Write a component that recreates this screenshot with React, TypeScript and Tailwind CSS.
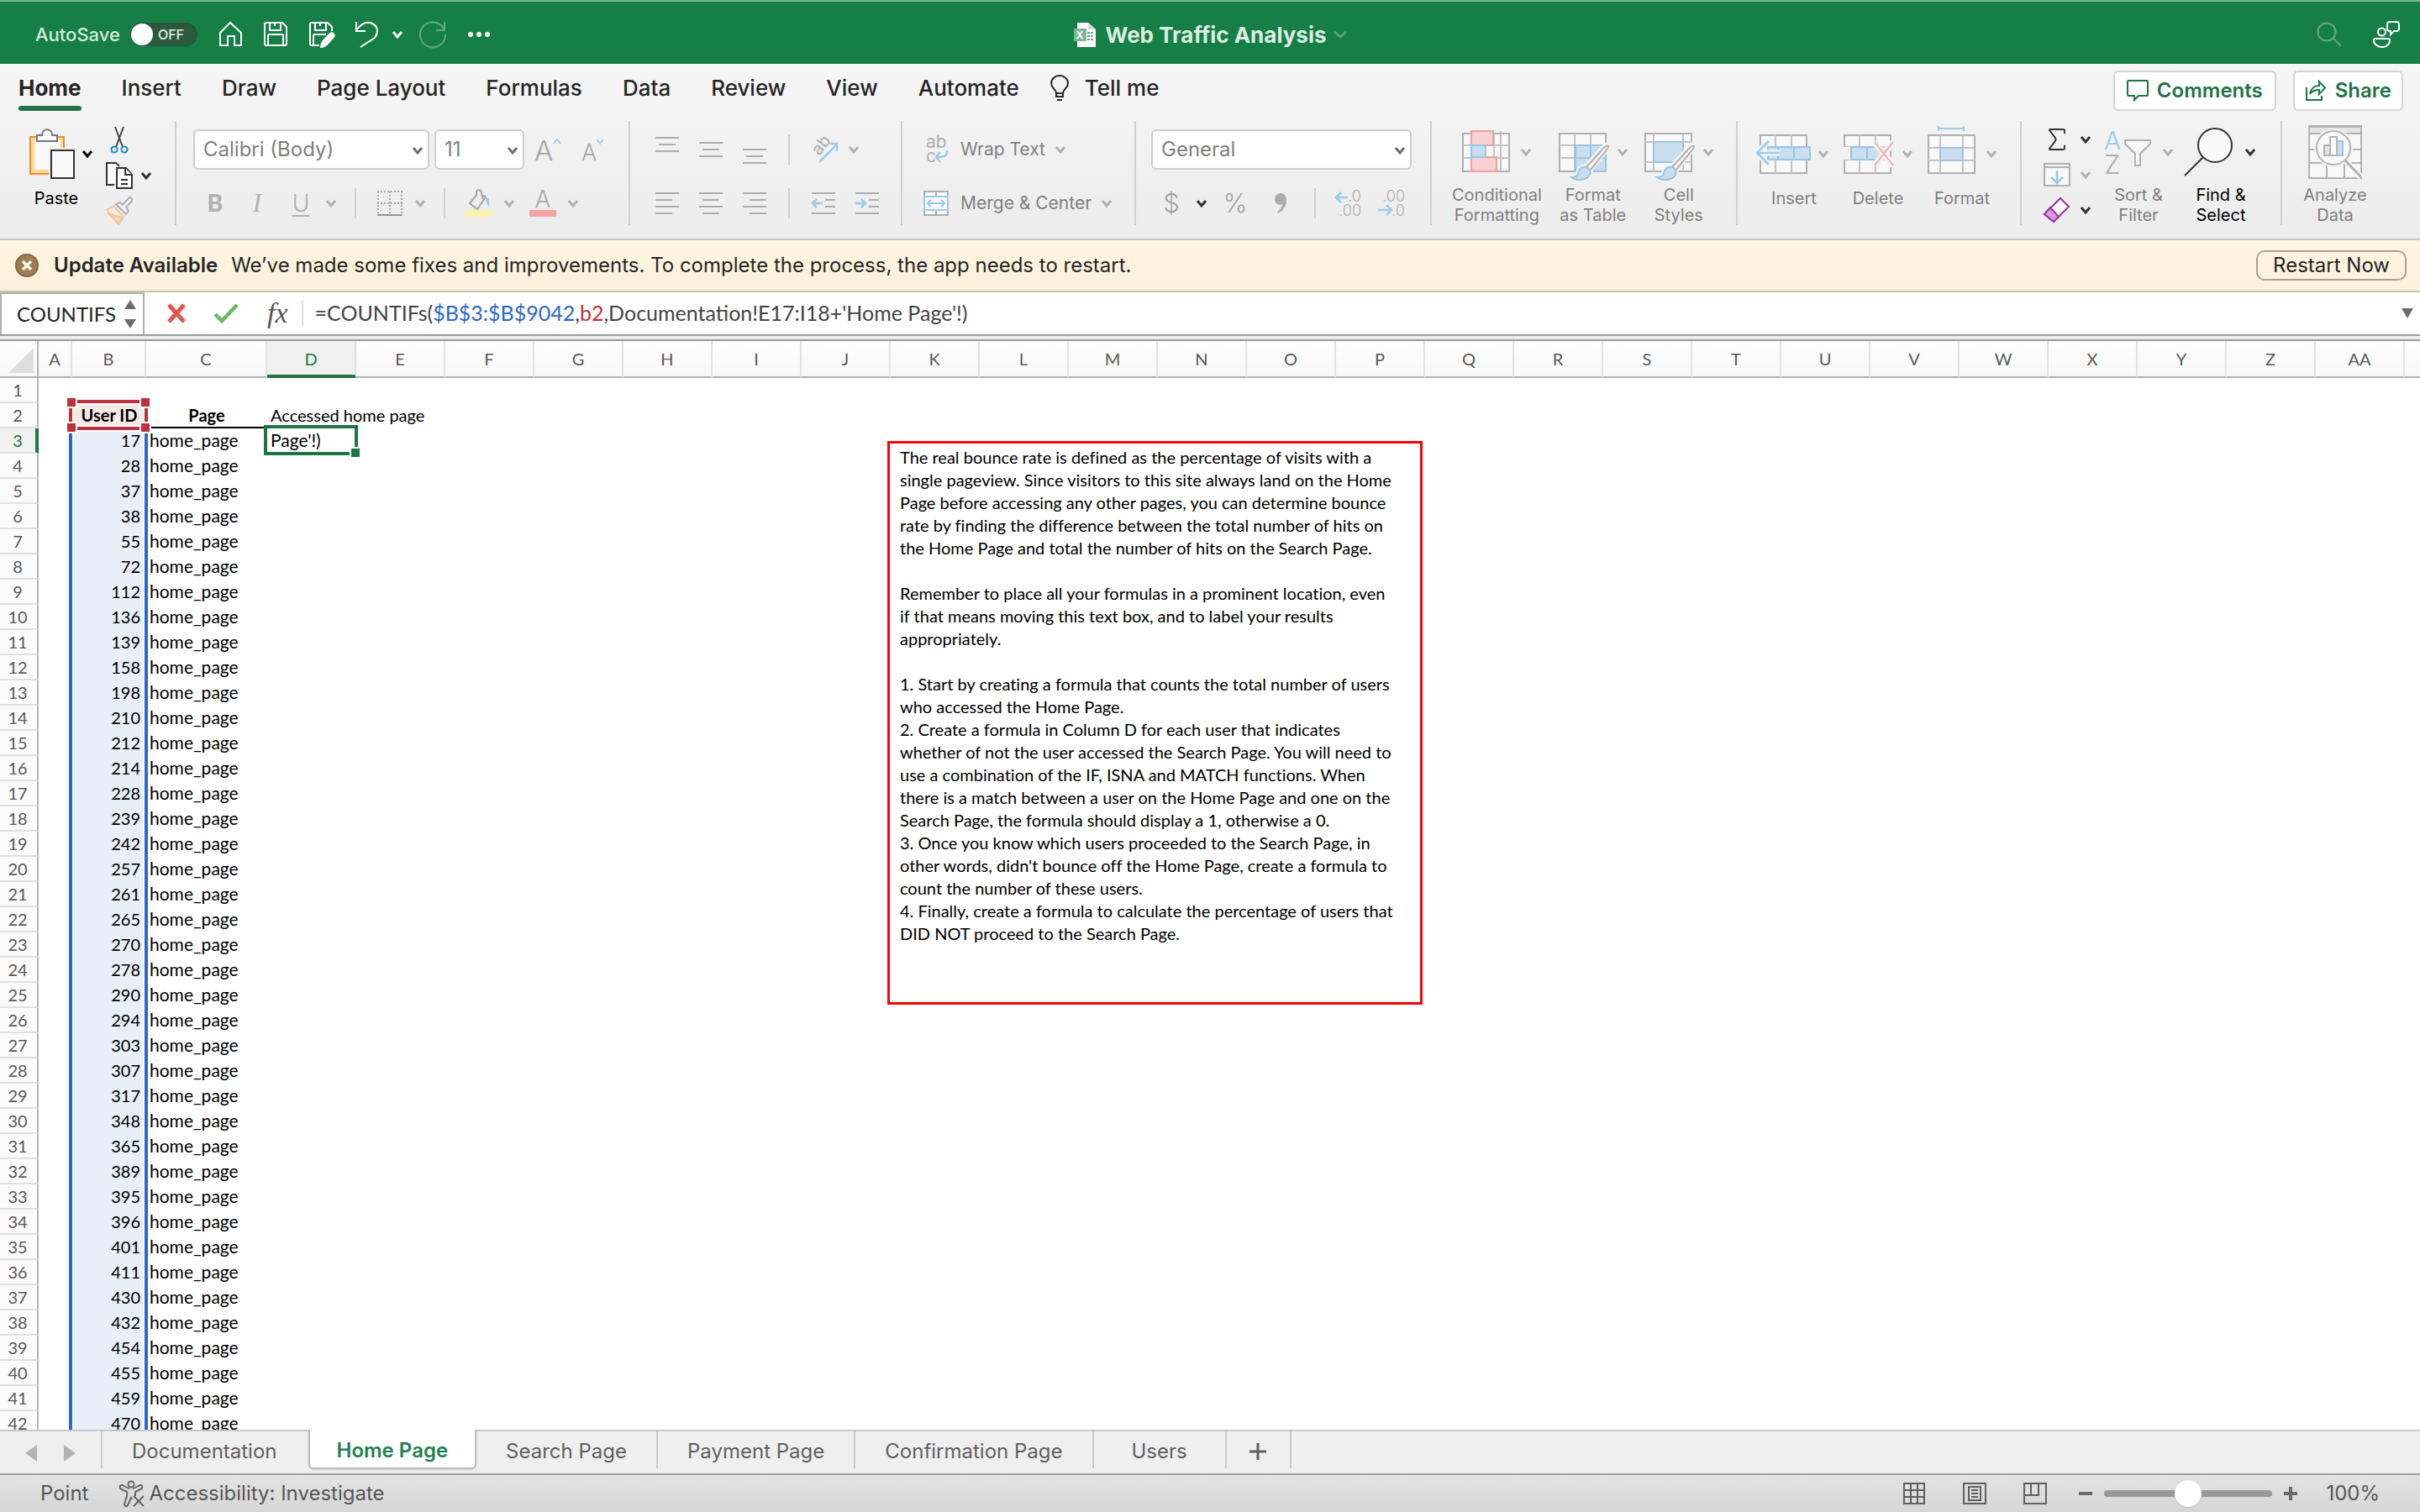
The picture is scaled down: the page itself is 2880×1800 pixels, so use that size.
import type { ReactNode } from 'react'
import { Sigma } from 'lucide-react'

const COLUMNS = [
  'A', 'B', 'C', 'D', 'E', 'F', 'G', 'H', 'I', 'J', 'K', 'L', 'M', 'N',
  'O', 'P', 'Q', 'R', 'S', 'T', 'U', 'V', 'W', 'X', 'Y', 'Z', 'AA',
]

/** Columns that differ from the default width. */
const COLUMN_WIDTHS: Record<string, string> = {
  A: 'w-[40px]',
  B: 'w-[88px]',
  C: 'w-[144px]',
}

/** User IDs from row 3 down. */
const USER_IDS = [
  17, 28, 37, 38, 55, 72, 112, 136, 139, 158, 198, 210, 212, 214, 228, 239, 242, 257, 261, 265,
  270, 278, 290, 294, 303, 307, 317, 348, 365, 389, 395, 396, 401, 411, 430, 432, 454, 455, 459, 470,
]

const RIBBON_TABS = [
  'Home', 'Insert', 'Draw', 'Page Layout', 'Formulas', 'Data', 'Review', 'View', 'Automate',
]

const SHEETS = [
  'Documentation', 'Home Page', 'Search Page', 'Payment Page', 'Confirmation Page', 'Users',
]

const NOTE = `The real bounce rate is defined as the percentage of visits with a
single pageview. Since visitors to this site always land on the Home
Page before accessing any other pages, you can determine bounce
rate by finding the difference between the total number of hits on
the Home Page and total the number of hits on the Search Page.

Remember to place all your formulas in a prominent location, even
if that means moving this text box, and to label your results
appropriately.

1. Start by creating a formula that counts the total number of users
who accessed the Home Page.
2. Create a formula in Column D for each user that indicates
whether of not the user accessed the Search Page. You will need to
use a combination of the IF, ISNA and MATCH functions. When
there is a match between a user on the Home Page and one on the
Search Page, the formula should display a 1, otherwise a 0.
3. Once you know which users proceeded to the Search Page, in
other words, didn't bounce off the Home Page, create a formula to
count the number of these users.
4. Finally, create a formula to calculate the percentage of users that
DID NOT proceed to the Search Page.`

export default function App() {
  return (
    <div className="flex h-screen flex-col overflow-hidden bg-white font-['Inter',sans-serif] text-[#262626] [&_svg]:overflow-visible">
      <TitleBar />
      <Ribbon />
      <UpdateBar />
      <FormulaBar />
      <Sheet />
      <SheetTabs />
      <StatusBar />
    </div>
  )
}

function TitleBar() {
  return (
    <header className="grid h-[76px] shrink-0 grid-cols-[1fr_auto_1fr] items-center border-t-2 border-[#7db393] bg-[#157f46] pt-1 text-white">
      <div className="flex items-center pl-[42px]">
        <label htmlFor="autosave" className="text-[22px] font-medium text-[#d5e9dd]">
          AutoSave
        </label>
        <span className="relative ml-3 inline-flex h-7 w-20 items-center rounded-full bg-[#2b5a3e] shadow-inner">
          <input id="autosave" type="checkbox" role="switch" className="absolute inset-0 opacity-0" />
          <span className="ml-px size-[26px] rounded-full bg-white" />
          <span className="ml-1.5 text-[16px] font-medium text-[#e3ece6]">OFF</span>
        </span>
        <div className="ml-6 flex items-center gap-6">
          <IconButton label="Home">
            <path d="M15 2 28 14v15h-8V18h-8v11H3V14Z" />
          </IconButton>
          <IconButton label="Save">
            <path d="M4 2h19l5 5v20a2 2 0 0 1-2 2H4a2 2 0 0 1-2-2V4a2 2 0 0 1 2-2Z" />
            <path d="M8 2v9h13V2M14 2v4M6 29V17a1 1 0 0 1 1-1h16a1 1 0 0 1 1 1v12" />
          </IconButton>
          <IconButton label="Save as">
            <path d="M13 29H4a2 2 0 0 1-2-2V4a2 2 0 0 1 2-2h19l5 5v5" />
            <path d="M8 2v9h13V2M14 2v4M6 29V17a1 1 0 0 1 1-1h14" />
            <path d="M15 31c0-5 2-7 11-16 2-2 6 1 4 4-8 9-10 12-15 12Z" fill="currentColor" />
          </IconButton>
          <IconButton label="Undo">
            <path d="M3 1v11h11M3 11C9 3 16 0 22 3c8 4 7 12 3 17L8 31" />
          </IconButton>
        </div>
        <button type="button" aria-label="Undo history" className="ml-4">
          <Chevron />
        </button>
        <button type="button" aria-label="Redo" className="ml-5 text-[#63a883]">
          <Svg>
            <path d="M30 1v10H20M30 11A15 15 0 1 0 31 16" />
          </Svg>
        </button>
        <button type="button" aria-label="More" className="ml-[26px]">
          <svg viewBox="0 0 26 6" className="h-1.5 w-[26px]" fill="currentColor">
            <circle cx="3" cy="3" r="3" />
            <circle cx="13" cy="3" r="3" />
            <circle cx="23" cy="3" r="3" />
          </svg>
        </button>
      </div>

      <button type="button" className="flex items-center text-[#dcede3]">
        <svg viewBox="0 0 28 30" className="h-[30px] w-7">
          <path d="M5 1h13l9 8v21H5Z" fill="#fff" />
          <path d="M18 1v8h9Z" fill="#cfdcd4" />
          <rect x="1" y="8" width="15" height="15" rx="1" fill="#7fb597" />
          <text x="8" y="20" fontSize="12" fontWeight="700" textAnchor="middle" fill="#fff">X</text>
          <path d="M17 13h7M17 17h7M17 21h7" stroke="#6aa585" strokeWidth="2" strokeDasharray="3 1" />
        </svg>
        <span className="ml-2.5 text-[26px] font-bold">Web Traffic Analysis</span>
        <svg viewBox="0 0 16 8" className="ml-2 h-2 w-4" fill="none" stroke="#5ea57e" strokeWidth="2.5">
          <path d="m1 1 7 6 7-6" />
        </svg>
      </button>

      <div className="flex items-center justify-end gap-9 pr-6">
        <button type="button" aria-label="Search" className="text-[#63a883]">
          <Svg>
            <circle cx="13" cy="13" r="10.5" />
            <path d="m21 21 9 9" />
          </Svg>
        </button>
        <button type="button" aria-label="Presence">
          <Svg>
            <circle cx="10.5" cy="13" r="4.5" />
            <path d="M3 21h15a2 2 0 0 1 2 2c0 5-4 8-9 8s-10-3-10-8a2 2 0 0 1 2-2Z" />
            <path d="M20 1h8a3 3 0 0 1 3 3v5a3 3 0 0 1-3 3h-3l-4 4v-4h-1a3 3 0 0 1-3-3V4a3 3 0 0 1 3-3Z" />
          </Svg>
        </button>
      </div>
    </header>
  )
}

function Ribbon() {
  return (
    <section className="h-[210px] shrink-0 border-b-2 border-[#c6c6c6] bg-linear-to-b from-[#f6f6f6] to-[#ececec]">
      <div className="flex h-[68px] items-start justify-between pt-2">
        <nav className="flex items-start gap-12 pl-[22px] text-[26px] leading-[42px] font-medium">
          {RIBBON_TABS.map((tab) => (
            <button
              key={tab}
              type="button"
              className={
                tab === 'Home'
                  ? 'relative font-bold after:absolute after:inset-x-0 after:top-[42px] after:h-1.5 after:rounded-full after:bg-[#217346]'
                  : ''
              }
            >
              {tab}
            </button>
          ))}
          <button type="button" className="-ml-3 flex items-center gap-[18px]">
            <svg viewBox="0 0 24 32" className="h-8 w-6" fill="none" stroke="currentColor" strokeWidth="2">
              <path d="M8 22c0-5-6-6-6-12a10 9 0 0 1 20 0c0 6-6 7-6 12ZM8 22v4h8v-4M9 30h6" />
            </svg>
            Tell me
          </button>
        </nav>
        <div className="flex gap-5 pr-5 text-[24px] font-semibold text-[#217346]">
          <button type="button" className="flex h-12 items-center gap-2.5 rounded-md border-2 border-[#d4d4d4] bg-white px-3.5">
            <svg viewBox="0 0 26 26" className="size-[26px]" fill="none" stroke="currentColor" strokeWidth="2">
              <path d="M2 1h22a1 1 0 0 1 1 1v16a1 1 0 0 1-1 1H14l-5 5v-5H2a1 1 0 0 1-1-1V2a1 1 0 0 1 1-1Z" />
            </svg>
            Comments
          </button>
          <button type="button" className="flex h-12 items-center gap-2.5 rounded-md border-2 border-[#d4d4d4] bg-white px-3">
            <svg viewBox="0 0 26 26" className="size-[26px]" fill="none" stroke="currentColor" strokeWidth="2">
              <path d="M2 9v15h18v-5" />
              <path d="M17 2v5C11 7 7 11 6 17c3-4 6-5 11-5v5l7-7.5Z" />
            </svg>
            Share
          </button>
        </div>
      </div>

      <div className="flex h-[124px] divide-x-2 divide-[#d0d0d0] text-[#7f7f7f]">
        <ClipboardGroup />
        <FontGroup />
        <AlignGroup />
        <WrapGroup />
        <NumberGroup />
        <StyleGroup />
        <CellsGroup />
        <EditGroup />
        <div className="flex pl-[22px]">
          <BigButton lines={['Analyze', 'Data']} noMenu>
            <svg viewBox="0 0 66 66" className="size-[66px]" fill="none" stroke="#b3b3b3" strokeWidth="2">
              <rect x="2" y="2" width="62" height="62" fill="#f8f8f8" />
              <path d="M2 3h62v8H2Z" fill="#e4e4e4" />
              <path d="M2 30h62M2 46h62M23 46v18M44 46v18" />
              <circle cx="31" cy="28" r="23" fill="#f3f3f3" stroke="none" />
              <circle cx="31" cy="28" r="20" fill="#fafafa" />
              <path d="m45 43 19 20" stroke="#f3f3f3" strokeWidth="7" />
              <path d="m45 43 19 20" strokeWidth="3" />
              <path d="M20 25h7v12h-7Z" fill="#e4e4e4" />
              <path d="M35 20h7v17h-7Z" fill="#c9dff0" stroke="#9cc3df" />
              <path d="M27 15h8v22h-8Z" fill="#fafafa" />
            </svg>
          </BigButton>
        </div>
      </div>
    </section>
  )
}

function ClipboardGroup() {
  return (
    <div className="flex w-[210px] pl-[34px]">
      <button type="button" className="flex flex-col text-black">
        <span className="flex h-[78px] items-center gap-2">
          <svg viewBox="0 0 56 62" className="h-[62px] w-14" fill="none" strokeWidth="2">
            <path d="M2 11h40v44H2Z" fill="#f7d98f" stroke="#ec8b38" />
            <path d="M7 14h31v36H7Z" fill="#f8f8f8" />
            <path d="M10 16V9h6c0-9 12-9 12 0h6v7Z" fill="#f8f8f8" stroke="#777" />
            <path d="M24 24h34v40H24Z" fill="#f0f0f0" />
            <path d="M27 27h27v33H27Z" fill="#fafafa" stroke="#333" />
          </svg>
          <Chevron />
        </span>
        <span className="mt-0.5 w-[66px] text-center text-[20px] leading-6">Paste</span>
      </button>
      <div className="ml-4 flex flex-col gap-2 pt-1.5 text-[#333]">
        <button type="button" aria-label="Cut" className="flex h-9 items-center pl-1">
          <svg viewBox="0 0 24 34" className="h-[34px] w-6" fill="none" stroke="#444" strokeWidth="2">
            <path d="m7 1 9 24M17 1 8 25" />
            <circle cx="6" cy="28" r="3.5" stroke="#1b87c9" />
            <circle cx="18" cy="28" r="3.5" stroke="#1b87c9" />
          </svg>
        </button>
        <button type="button" aria-label="Copy" className="flex h-9 items-center gap-2.5">
          <svg viewBox="0 0 32 34" className="h-[34px] w-8" fill="#fafafa" stroke="#333" strokeWidth="2">
            <path d="M10 28H1V2h11l4 4" />
            <path d="M13 8h11l7 8v16H13Z" />
            <path d="M23 8v8h8M18 22h8M18 27h8" />
          </svg>
          <Chevron />
        </button>
        <button type="button" aria-label="Format painter" className="flex h-9 items-center">
          <svg viewBox="0 0 32 34" className="h-[34px] w-8" fill="none" strokeWidth="2">
            <path d="M1 16 9 11l12 13-6 9Z" fill="#f8ecdf" stroke="#f2c4a0" />
            <path d="m4 21 16 4-5 7Z" fill="#f6d9b4" stroke="#f2c4a0" />
            <path d="m12 9 12 12 3-4-3-4 7-8c1-3-2-5-4-3l-7 8-3-3Z" fill="#f5f5f5" stroke="#adadad" />
          </svg>
        </button>
      </div>
    </div>
  )
}

function FontGroup() {
  return (
    <Rows className="w-[540px] pl-5">
      <div className="flex h-12 items-center">
        <Dropdown label="Font" value="Calibri (Body)" className="w-[281px]" />
        <Dropdown label="Font size" value="11" className="ml-1.5 w-[107px]" />
        <button type="button" aria-label="Increase font size" className="ml-3">
          <svg viewBox="0 0 32 36" className="h-9 w-8" fill="none" stroke="#9ccbe8" strokeWidth="2">
            <text x="0" y="31" fontSize="33" fontWeight="300" fill="#a6a6a6" stroke="none">A</text>
            <path d="m23 11 4-5 4 5" />
          </svg>
        </button>
        <button type="button" aria-label="Decrease font size" className="ml-6">
          <svg viewBox="0 0 32 36" className="h-9 w-8" fill="none" stroke="#9ccbe8" strokeWidth="2">
            <text x="0" y="31" fontSize="27" fontWeight="300" fill="#a6a6a6" stroke="none">A</text>
            <path d="m18 6 4 5 4-5" />
          </svg>
        </button>
      </div>
      <div className="flex h-9 items-center text-[28px] leading-9 text-[#b0b0b0]">
        <button type="button" aria-label="Bold" className="w-11 pl-2 text-center font-bold">B</button>
        <button type="button" aria-label="Italic" className="ml-1.5 w-12 pl-1 text-center font-['Liberation_Serif',serif] text-[31px] italic">I</button>
        <button type="button" aria-label="Underline" className="ml-1 w-12 pl-1 text-center font-light underline underline-offset-4">U</button>
        <Chevron className="ml-2" />
        <Divider className="ml-[22px]" />
        <svg viewBox="0 0 32 32" className="ml-6 size-8" fill="none" stroke="#a9a9a9" strokeWidth="2">
          <path d="M1 2h30M1 16h30M2 2v27M16 2v27M30 2v27" strokeDasharray="2 2" />
          <path d="M1 30h30" stroke="#969696" />
        </svg>
        <Chevron className="ml-3.5" />
        <Divider className="ml-[22px]" />
        <svg viewBox="0 0 32 34" className="ml-6 h-[34px] w-8" fill="none" stroke="#a6a6a6" strokeWidth="2">
          <path d="M0 25h32v8H0Z" fill="#f7f5a9" stroke="none" />
          <path d="M23 9c5 0 6 5 5 12-3-3-4-7-5-12Z" fill="#a9cbe5" stroke="none" />
          <path d="M14 6 5 17l9 7 9-13V8c-3 0-3 3-3 4M13 8V4c0-4 5-4 6 0l1 6" />
        </svg>
        <Chevron className="ml-3.5" />
        <svg viewBox="0 0 32 34" className="ml-[18px] h-[34px] w-8">
          <text x="16" y="22" fontSize="28" fontWeight="300" textAnchor="middle" fill="#a6a6a6">A</text>
          <path d="M0 25h32v8H0Z" fill="#f5a2a2" />
        </svg>
        <Chevron className="ml-3.5" />
      </div>
    </Rows>
  )
}

function AlignGroup() {
  return (
    <Rows className="w-[324px] pl-[30px]">
      <div className="flex h-12 items-center">
        <div className="flex gap-6">
          <Lines d="M0 5h28M4 13h20M0 21h28" label="Top align" />
          <Lines d="M0 11h28M4 19h20M0 27h28" label="Middle align" />
          <Lines d="M0 19h28M4 27h20M0 35h28" label="Bottom align" />
        </div>
        <Divider className="ml-[26px]" />
        <button type="button" aria-label="Orientation" className="ml-6 flex items-center gap-3 text-[#b0b0b0]">
          <svg viewBox="0 0 34 34" className="size-[34px]" fill="none" stroke="#9ccbe8" strokeWidth="2.5">
            <text fontSize="20" fill="#adadad" stroke="none" transform="translate(11 25) rotate(-52)">ab</text>
            <path d="M11 32 32 11M23 10h9v9" />
          </svg>
          <Chevron />
        </button>
      </div>
      <div className="flex h-9 items-center">
        <div className="flex gap-6">
          <Lines d="M0 7h28M0 15h20M0 23h28M0 31h20" label="Align left" />
          <Lines d="M0 7h28M4 15h20M0 23h28M4 31h20" label="Center" />
          <Lines d="M0 7h28M8 15h20M0 23h28M8 31h20" label="Align right" />
        </div>
        <Divider className="ml-[26px]" />
        <div className="ml-[26px] flex gap-6">
          <Lines d="M0 7h28M16 15h12M16 23h12M0 31h28" accent="M13 19H1M6 14l-5 5 5 5" label="Decrease indent" />
          <Lines d="M0 7h28M16 15h12M16 23h12M0 31h28" accent="M0 19h12M7 14l5 5-5 5" label="Increase indent" />
        </div>
      </div>
    </Rows>
  )
}

function WrapGroup() {
  return (
    <Rows className="w-[278px] pl-6 text-[21px]">
      <button type="button" className="flex h-12 items-center">
        <svg viewBox="0 0 32 34" className="h-[34px] w-8" fill="none" stroke="#9ccbe8" strokeWidth="2.5">
          <text x="4" y="15" fontSize="21" fill="#b0b0b0" stroke="none">ab</text>
          <text x="4" y="32" fontSize="21" fill="#b0b0b0" stroke="none">c</text>
          <path d="M29 18c1 7-3 8-13 8M21 20l-5 6 5 6" />
        </svg>
        <span className="ml-[13px]">Wrap Text</span>
        <Chevron className="ml-3 text-[#b0b0b0]" />
      </button>
      <button type="button" className="flex h-9 items-center">
        <svg viewBox="0 0 32 32" className="size-8" fill="#fafafa" stroke="#b0b0b0" strokeWidth="2">
          <path d="M2 2h28v28H2ZM16 2v5M16 25v5" />
          <path d="M2 8h28v16H2Z" stroke="#9ccbe8" />
          <path d="M6 16h20M10 12l-4 4 4 4M22 12l4 4-4 4" fill="none" stroke="#9ccbe8" />
        </svg>
        <span className="ml-[13px]">Merge &amp; Center</span>
        <Chevron className="ml-3 text-[#b0b0b0]" />
      </button>
    </Rows>
  )
}

function NumberGroup() {
  return (
    <Rows className="w-[352px] pl-[18px]">
      <Dropdown label="Number format" value="General" className="w-[310px]" />
      <div className="flex h-9 items-center text-[31px] leading-9 font-light text-[#a3a3a3]">
        <button type="button" aria-label="Currency" className="ml-3.5 w-5">$</button>
        <Chevron className="ml-5 text-[#333]" />
        <button type="button" aria-label="Percent" className="ml-[18px] w-8">%</button>
        <svg viewBox="0 0 16 26" className="ml-[30px] h-[26px] w-4" fill="#adadad">
          <path d="M8 1c5 0 7 4 7 8 0 8-4 13-10 16l-1-2c4-3 6-6 6-9-5 2-9-1-9-6 0-4 3-7 7-7Z" />
        </svg>
        <Divider className="ml-8" />
        <svg viewBox="0 0 34 34" className="ml-[22px] size-[34px]" fill="none" stroke="#9ccbe8" strokeWidth="2.5">
          <text x="32" y="15" fontSize="18" textAnchor="end" fill="#adadad" stroke="none">.0</text>
          <text x="32" y="32" fontSize="18" textAnchor="end" fill="#adadad" stroke="none">.00</text>
          <path d="M16 10H3M8 4l-6 6 6 6" />
        </svg>
        <svg viewBox="0 0 34 34" className="ml-[18px] size-[34px]" fill="none" stroke="#9ccbe8" strokeWidth="2.5">
          <text x="32" y="15" fontSize="18" textAnchor="end" fill="#adadad" stroke="none">.00</text>
          <text x="32" y="32" fontSize="18" textAnchor="end" fill="#adadad" stroke="none">.0</text>
          <path d="M0 25h15M10 19l6 6-6 6" />
        </svg>
      </div>
    </Rows>
  )
}

function StyleGroup() {
  return (
    <div className="flex w-[364px] gap-5 pl-6">
      <BigButton lines={['Conditional', 'Formatting']}>
        <TableSvg>
          <Grid />
          <path d="M11 9h26v17H11ZM11 40h30v17H11Z" fill="#f8d0d3" stroke="#e9a3a0" />
          <path d="M11 26h17v14H11Z" fill="#c9dff0" stroke="#9cc3df" />
          <path d="M46 9v48" stroke="#c0c0c0" />
        </TableSvg>
      </BigButton>
      <BigButton lines={['Format', 'as Table']}>
        <TableSvg>
          <Grid />
          <path d="M20 26h36v31H20Z" fill="#c9dff0" stroke="#9cc3df" />
          <path d="M38 26v31M20 41h36" stroke="#9cc3df" />
          <Brush />
        </TableSvg>
      </BigButton>
      <BigButton lines={['Cell', 'Styles']}>
        <TableSvg>
          <path d="M1 12h55v45H1Z" fill="#f8f8f8" stroke="#b0b0b0" />
          <path d="M11 12v45M46 12v45M1 22h55M1 46h55" stroke="#c4c4c4" />
          <path d="M11 22h35v24H11Z" fill="#c9dff0" stroke="#9cc3df" />
          <Brush />
        </TableSvg>
      </BigButton>
    </div>
  )
}

function CellsGroup() {
  return (
    <div className="flex w-[338px] gap-[18px] pl-[26px]">
      <BigButton lines={['Insert']}>
        <TableSvg>
          <Grid />
          <path d="M10 26h50v15H10Z" fill="#c9dff0" stroke="#9cc3df" />
          <path d="M22 26v15M41 26v15" stroke="#9cc3df" />
          <path d="M24 33H-2M11 19-3 33l14 14" stroke="#f3f3f3" strokeWidth="7" />
          <path d="M24 33H-2M11 19-3 33l14 14" stroke="#9ccbe8" strokeWidth="2.5" />
        </TableSvg>
      </BigButton>
      <BigButton lines={['Delete']}>
        <TableSvg>
          <Grid />
          <path d="M-1 26h10v15H-1Z" fill="#f2f2f2" stroke="none" />
          <path d="M9 26h38v15H9ZM28 26v15" fill="#c9dff0" stroke="#9cc3df" />
          <path d="m37 20 22 28M59 20 37 48" stroke="#f3f3f3" strokeWidth="8" />
          <path d="m37 20 22 28M59 20 37 48" stroke="#f3aaa8" />
        </TableSvg>
      </BigButton>
      <BigButton lines={['Format']}>
        <TableSvg>
          <path d="M1 12h55v45H1Z" fill="#f8f8f8" stroke="#b0b0b0" />
          <path d="M15 12v45M42 12v45M1 27h55M1 42h55" stroke="#c4c4c4" />
          <path d="M15 27h27v15H15Z" fill="#c9dff0" stroke="#9cc3df" />
          <path d="M13 4h30M13 1v6M43 1v6" stroke="#9ccbe8" />
        </TableSvg>
      </BigButton>
    </div>
  )
}

function EditGroup() {
  return (
    <div className="flex w-[310px] pl-6">
      <div className="flex flex-col gap-1.5 pt-1 text-[#333]">
        <button type="button" aria-label="AutoSum" className="flex h-[38px] items-center gap-2.5">
          <Sigma className="size-9" strokeWidth={1.3} />
          <Chevron />
        </button>
        <button type="button" aria-label="Fill" className="flex h-[38px] items-center gap-2.5 text-[#b0b0b0]">
          <svg viewBox="0 0 36 30" className="h-[30px] w-9" fill="none" stroke="#b0b0b0" strokeWidth="2">
            <path d="M3 2h30v26H3ZM3 6h30" fill="#f8f8f8" />
            <path d="M18 10v14M11 18l7 7 7-7" stroke="#9ccbe8" strokeWidth="2.5" />
          </svg>
          <Chevron />
        </button>
        <button type="button" aria-label="Clear" className="flex h-[38px] items-center gap-2.5">
          <svg viewBox="0 0 36 32" className="h-8 w-9" fill="#fafafa" stroke="#99319f" strokeWidth="2">
            <path d="m22 2 10 10-18 18L3 21Z" />
            <path d="m10 13 10 11-6 6-11-9Z" fill="#d59bdb" />
          </svg>
          <Chevron />
        </button>
      </div>
      <div className="ml-4 flex gap-4">
        <BigButton lines={['Sort &', 'Filter']}>
          <svg viewBox="0 0 56 60" className="h-[60px] w-14" fill="#f8f8f8" stroke="#b0b0b0" strokeWidth="2">
            <text x="0" y="27" fontSize="30" fontWeight="300" fill="#9ccbe8" stroke="none">A</text>
            <text x="0" y="56" fontSize="31" fontWeight="300" fill="#b0b0b0" stroke="none">Z</text>
            <path d="M25 16h30v4L43 32v14h-6V32L25 20Z" />
          </svg>
        </BigButton>
        <BigButton lines={['Find &', 'Select']} dark>
          <svg viewBox="0 0 60 60" className="-ml-1 h-[60px] w-[60px]" fill="#fafafa" stroke="#333" strokeWidth="2">
            <circle cx="38" cy="22" r="20" />
            <path d="M24 36 2 58" />
          </svg>
        </BigButton>
      </div>
    </div>
  )
}

function UpdateBar() {
  return (
    <section className="flex h-[62px] shrink-0 items-center border-b-2 border-[#cbc2a9] bg-linear-to-b from-[#fff5df] to-[#fbf0dc] pr-4 pl-[18px] text-[24px]">
      <button type="button" aria-label="Dismiss">
        <svg viewBox="0 0 28 28" className="size-7" fill="none" stroke="#fff5df" strokeWidth="3.5">
          <circle cx="14" cy="14" r="13" fill="#a07e55" stroke="#86653c" strokeWidth="2" />
          <path d="m9 9 10 10M19 9 9 19" />
        </svg>
      </button>
      <strong className="ml-[18px] font-semibold">Update Available</strong>
      <p className="ml-4 flex-1">
        We’ve made some fixes and improvements. To complete the process, the app needs to restart.
      </p>
      <button type="button" className="h-9 rounded-[10px] border-2 border-[#a9a294] px-[18px] leading-8">
        Restart Now
      </button>
    </section>
  )
}

function FormulaBar() {
  return (
    <section className="flex h-[58px] shrink-0 items-stretch border-b-2 border-[#9c9c9c] bg-[#ededed] pb-1">
      <div className="flex flex-1 items-center border-b-2 border-[#9c9c9c] bg-white font-['Lato',sans-serif] text-[25px]">
        <div className="flex h-full w-[172px] items-center border-2 border-b-0 border-[#b3b3b3] pr-2 pl-[18px]">
          <input
            aria-label="Name box"
            defaultValue="COUNTIFS"
            className="w-0 flex-1 bg-transparent text-[24px] outline-none"
          />
          <svg viewBox="0 0 14 34" className="h-[34px] w-3.5" fill="#6b6b6b">
            <path d="m7 0 7 11H0ZM7 34l7-11H0Z" />
          </svg>
        </div>
        <button type="button" aria-label="Cancel" className="ml-[26px]">
          <svg viewBox="0 0 24 24" className="size-6" stroke="#e25551" strokeWidth="5">
            <path d="m3 2 18 20M21 2 3 22" />
          </svg>
        </button>
        <button type="button" aria-label="Enter" className="ml-8">
          <svg viewBox="0 0 30 24" className="h-6 w-[30px]" fill="none" stroke="#68b964" strokeWidth="4.5">
            <path d="m2 13 8 8L28 2" />
          </svg>
        </button>
        <button
          type="button"
          aria-label="Insert function"
          className="ml-[34px] font-['Liberation_Serif',serif] text-[34px] leading-9 text-[#555] italic"
        >
          fx
        </button>
        <span className="ml-4 h-[30px] w-0.5 bg-[#dcdcdc]" />
        <div role="textbox" aria-label="Formula" className="ml-3.5 flex-1 whitespace-pre text-[#444]">
          =COUNTIFs(<span className="text-[#2f67c4]">$B$3:$B$9042</span>,
          <span className="text-[#c2313b]">b2</span>,Documentation!E17:I18+'Home Page'!)
        </div>
        <button type="button" aria-label="Expand formula bar" className="mr-2">
          <svg viewBox="0 0 14 12" className="h-3 w-3.5" fill="#6b6b6b">
            <path d="M0 0h14L7 12Z" />
          </svg>
        </button>
      </div>
    </section>
  )
}

function Sheet() {
  return (
    <main className="relative min-h-0 flex-1 overflow-hidden bg-white font-['Lato',sans-serif] [font-variant-ligatures:none]">
      <table className="w-full table-fixed border-separate border-spacing-0 text-[20px] leading-7 text-black [&_td]:align-top">
        <colgroup>
          <col className="w-[46px]" />
          {COLUMNS.map((name) => (
            <col key={name} className={COLUMN_WIDTHS[name] ?? 'w-[106px]'} />
          ))}
          <col />
        </colgroup>
        <thead>
          <tr className="h-11 bg-linear-to-b from-[#fdfdfd] to-[#f7f7f7] text-[#595959]">
            <th className="border-r-2 border-b-2 border-[#b5b5b5] p-0">
              <svg viewBox="0 0 44 42" className="h-[42px] w-11" fill="#dedede">
                <path d="M40 8v30H10Z" />
              </svg>
            </th>
            {COLUMNS.map((name) => (
              <th
                key={name}
                scope="col"
                className={
                  name === 'D'
                    ? 'border-r-2 border-b-4 border-r-[#dedede] border-b-[#217346] bg-[#f0f0f0] p-0 pt-0.5 font-normal text-[#217346]'
                    : 'border-r-2 border-b-2 border-r-[#e2e2e2] border-b-[#b5b5b5] p-0 font-normal'
                }
              >
                {name}
              </th>
            ))}
            <th className="border-b-2 border-[#b5b5b5] p-0" />
          </tr>
        </thead>
        <tbody>
          <tr className="h-[30px]">
            <RowHeader n={1} />
          </tr>
          <tr className="h-[30px]">
            <RowHeader n={2} />
            <td />
            <td className="bg-[#f8e9e9] p-0 text-center font-bold">User ID</td>
            <td className="p-0 text-center font-bold shadow-[inset_0_-2px_0_#000]">Page</td>
            <td className="overflow-visible p-0 pl-1 whitespace-nowrap">Accessed home page</td>
          </tr>
          {USER_IDS.map((id, i) => (
            <tr key={id} className="h-[30px]">
              <RowHeader n={i + 3} />
              <td />
              <td className="bg-[#e8eff9] p-0 pr-[7px] text-right">{id}</td>
              <td className="p-0 pl-1 text-[21px]">home_page</td>
              {i === 0 && <td className="p-0 pl-1 text-[21px]">Page'!)</td>}
            </tr>
          ))}
        </tbody>
      </table>

      {/* Blue range highlight, $B$3:$B$9042 */}
      <div className="absolute top-[104px] bottom-0 left-[82px] w-[94px] border-x-4 border-[#2f67c4]">
        <div className="h-full border-x-2 border-white" />
      </div>

      {/* Red reference highlight on B2 */}
      <div className="absolute top-[70px] left-[82px] h-9 w-[94px] border-4 border-[#bf323c] outline-2 outline-white">
        <div className="h-full border-2 border-white" />
        <Handle className="-top-1.5 -left-1.5" />
        <Handle className="-top-1.5 -right-1.5" />
        <Handle className="-bottom-1.5 -left-1.5" />
        <Handle className="-right-1.5 -bottom-1.5" />
      </div>

      {/* Cell being edited */}
      <div className="absolute top-[100px] left-[314px] h-9 w-28 border-4 border-[#217346]">
        <span className="absolute -right-1.5 -bottom-1.5 size-3 border-t-2 border-l-2 border-white bg-[#217346]" />
      </div>

      <div className="absolute top-[119px] left-[1056px] h-[671px] w-[637px] border-3 border-[#fb0007] bg-white pt-[3px] pl-3 text-[20px] leading-[27px] whitespace-pre text-black">
        {NOTE}
      </div>
    </main>
  )
}

function RowHeader({ n }: { n: number }) {
  return (
    <th
      scope="row"
      className={
        n === 3
          ? 'border-r-4 border-b-2 border-r-[#217346] border-b-[#e0e0e0] bg-[#f0f0f0] p-0 font-normal text-[#217346]'
          : 'border-r-2 border-b-2 border-r-[#b5b5b5] border-b-[#e0e0e0] bg-[#fbfbfb] p-0 pr-0.5 font-normal text-[#595959]'
      }
    >
      {n}
    </th>
  )
}

function SheetTabs() {
  return (
    <nav className="flex h-[52px] shrink-0 items-start border-t-2 border-[#c9c9c9] bg-[#efefef] text-[24px] text-[#5f5f5f]">
      <div className="flex h-11 w-[122px] items-center gap-8 border-r-2 border-[#c9c9c9] pt-2 pl-[30px]">
        <button type="button" aria-label="Previous sheet">
          <svg viewBox="0 0 14 20" className="h-5 w-3.5" fill="#b3b3b3"><path d="M14 0v20L0 10Z" /></svg>
        </button>
        <button type="button" aria-label="Next sheet">
          <svg viewBox="0 0 14 20" className="h-5 w-3.5" fill="#b3b3b3"><path d="M0 0v20l14-10Z" /></svg>
        </button>
      </div>
      {SHEETS.map((sheet) => (
        <button
          key={sheet}
          type="button"
          className={
            sheet === 'Home Page'
              ? '-mt-0.5 h-[47px] rounded-b-md border-x-2 border-b-2 border-[#bcbcbc] bg-white px-8 pt-1 font-semibold text-[#218150] shadow-sm'
              : 'h-11 min-w-[158px] border-r-2 border-[#c9c9c9] px-[35px] pt-1 [&:has(+.font-semibold)]:border-transparent'
          }
        >
          {sheet}
        </button>
      ))}
      <button type="button" aria-label="Add sheet" className="flex h-11 w-[77px] items-center justify-center border-r-2 border-[#c9c9c9] pt-1">
        <svg viewBox="0 0 20 20" className="size-5" stroke="#5f5f5f" strokeWidth="3"><path d="M10 0v20M0 10h20" /></svg>
      </button>
    </nav>
  )
}

function StatusBar() {
  return (
    <footer className="flex h-[46px] shrink-0 items-center border-t-2 border-[#9f9f9f] bg-linear-to-b from-[#e3e3e3] to-[#d6d6d6] px-12 text-[24px] text-[#565656]">
      <span>Point</span>
      <button type="button" className="ml-9 flex items-center gap-1">
        <svg viewBox="0 0 32 32" className="size-8" fill="none" stroke="#666" strokeWidth="2">
          <circle cx="15" cy="5" r="3.5" />
          <path d="M13 10C8 9 6 6 4 6c-3 0-3 4 0 5l6 3c2 4-3 12-3 15 0 2 3 3 4 1l4-9 1 2M17 10c5-1 7-4 9-4 3 0 3 4 0 5l-6 3v5" />
          <path d="m18 19 12 12M30 19 18 31" />
        </svg>
        Accessibility: Investigate
      </button>
      <div className="ml-auto flex items-center">
        <button type="button" aria-label="Normal view">
          <svg viewBox="0 0 28 28" className="size-7" fill="none" stroke="#606060" strokeWidth="2">
            <path d="M2 2h24v24H2ZM10 2v24M18 2v24M2 10h24M2 18h24" />
          </svg>
        </button>
        <button type="button" aria-label="Page layout view" className="ml-11">
          <svg viewBox="0 0 28 28" className="size-7" fill="none" stroke="#606060" strokeWidth="2">
            <path d="M1 2h26v24H1ZM7 6h14v16H7ZM10 10h8M10 14h8M10 18h8" />
          </svg>
        </button>
        <button type="button" aria-label="Page break view" className="ml-11">
          <svg viewBox="0 0 28 28" className="size-7" fill="none" stroke="#606060" strokeWidth="2">
            <path d="M1 2h26v24H1ZM1 16h17V2M9 2v14" />
          </svg>
        </button>
        <button type="button" aria-label="Zoom out" className="ml-[38px] h-1 w-4 bg-[#6b6b6b]" />
        <input
          type="range"
          aria-label="Zoom"
          defaultValue={50}
          className="ml-3.5 h-2 w-[200px] appearance-none rounded-full bg-[#999] [&::-webkit-slider-thumb]:size-8 [&::-webkit-slider-thumb]:appearance-none [&::-webkit-slider-thumb]:rounded-full [&::-webkit-slider-thumb]:bg-white [&::-webkit-slider-thumb]:shadow"
        />
        <button type="button" aria-label="Zoom in" className="ml-3.5">
          <svg viewBox="0 0 16 16" className="size-4" stroke="#6b6b6b" strokeWidth="4"><path d="M8 0v16M0 8h16" /></svg>
        </button>
        <span className="ml-[34px]">100%</span>
      </div>
    </footer>
  )
}

/** Two stacked rows of small controls inside a ribbon group. */
function Rows({ className, children }: { className: string; children: ReactNode }) {
  return <div className={'flex flex-col gap-[22px] pt-2.5 ' + className}>{children}</div>
}

function BigButton({
  lines,
  dark,
  noMenu,
  children,
}: {
  lines: string[]
  dark?: boolean
  noMenu?: boolean
  children: ReactNode
}) {
  return (
    <button type="button" className={'flex min-w-[82px] flex-col items-center ' + (dark ? 'text-black' : 'text-[#7f7f7f]')}>
      <span className="flex h-[78px] items-center gap-3.5">
        {children}
        {!noMenu && <Chevron className={dark ? 'text-[#333]' : 'text-[#b0b0b0]'} />}
      </span>
      <span className="mt-0.5 text-[20px] leading-6">
        {lines.map((line) => (
          <span key={line} className="block whitespace-nowrap">{line}</span>
        ))}
      </span>
    </button>
  )
}

function Dropdown({ label, value, className }: { label: string; value: string; className: string }) {
  return (
    <span className={'relative inline-block ' + className}>
      <select
        aria-label={label}
        defaultValue={value}
        className="h-12 w-full appearance-none rounded-md border-2 border-[#cfcfcf] bg-white pl-2.5 text-[24px] text-[#7f7f7f]"
      >
        <option>{value}</option>
      </select>
      <Chevron className="pointer-events-none absolute top-5 right-2 text-[#6f6f6f]" />
    </span>
  )
}

function Chevron({ className = '' }: { className?: string }) {
  return (
    <svg viewBox="0 0 12 10" className={'h-2.5 w-3 shrink-0 ' + className} fill="none" stroke="currentColor" strokeWidth="3">
      <path d="m1 2 5 6 5-6" />
    </svg>
  )
}

function Divider({ className }: { className: string }) {
  return <span className={'h-9 w-0.5 bg-[#d0d0d0] ' + className} />
}

function Svg({ children }: { children: ReactNode }) {
  return (
    <svg viewBox="0 0 32 32" className="size-8" fill="none" stroke="currentColor" strokeWidth="2">
      {children}
    </svg>
  )
}

function IconButton({ label, children }: { label: string; children: ReactNode }) {
  return (
    <button type="button" aria-label={label}>
      <svg viewBox="0 0 30 32" className="h-8 w-[30px]" fill="none" stroke="currentColor" strokeWidth="2">
        {children}
      </svg>
    </button>
  )
}

/** Alignment-style glyph: grey rules with an optional blue arrow. */
function Lines({ d, accent, label }: { d: string; accent?: string; label: string }) {
  return (
    <button type="button" aria-label={label}>
      <svg viewBox="0 0 28 38" className="h-[38px] w-7" fill="none" strokeWidth="2">
        <path d={d} stroke="#adadad" />
        {accent && <path d={accent} stroke="#9ccbe8" strokeWidth="2.5" />}
      </svg>
    </button>
  )
}

function TableSvg({ children }: { children: ReactNode }) {
  return (
    <svg viewBox="0 0 56 68" className="h-[68px] w-14" fill="none" strokeWidth="2">
      {children}
    </svg>
  )
}

function Grid() {
  return (
    <>
      <path d="M1 12h55v45H1Z" fill="#f8f8f8" stroke="#b0b0b0" />
      <path d="M19 12v45M38 12v45M1 26h55M1 41h55" stroke="#c4c4c4" />
    </>
  )
}

function Brush() {
  return (
    <>
      <path d="M60 26c-2-2-6 1-9 5L32 52c-6-1-8 3-9 8-1 3-4 4-8 4 6 5 18 4 22-3 1-2 1-4 0-6l20-24c2-3 4-4 3-5Z" fill="#f8f8f8" stroke="#f3f3f3" strokeWidth="6" />
      <path d="M59 27c-2-1-5 1-8 5L33 52l4 4 18-22c3-4 5-6 4-7Z" fill="#f8f8f8" stroke="#b0b0b0" />
      <path d="M32 52c-6-1-8 3-9 8-1 3-4 4-8 4 6 5 18 4 22-3 2-4-1-8-5-9Z" fill="#c9dff0" stroke="#9cc3df" />
    </>
  )
}

function Handle({ className }: { className: string }) {
  return <span className={'absolute size-2.5 bg-[#bf323c] outline-2 outline-white ' + className} />
}
